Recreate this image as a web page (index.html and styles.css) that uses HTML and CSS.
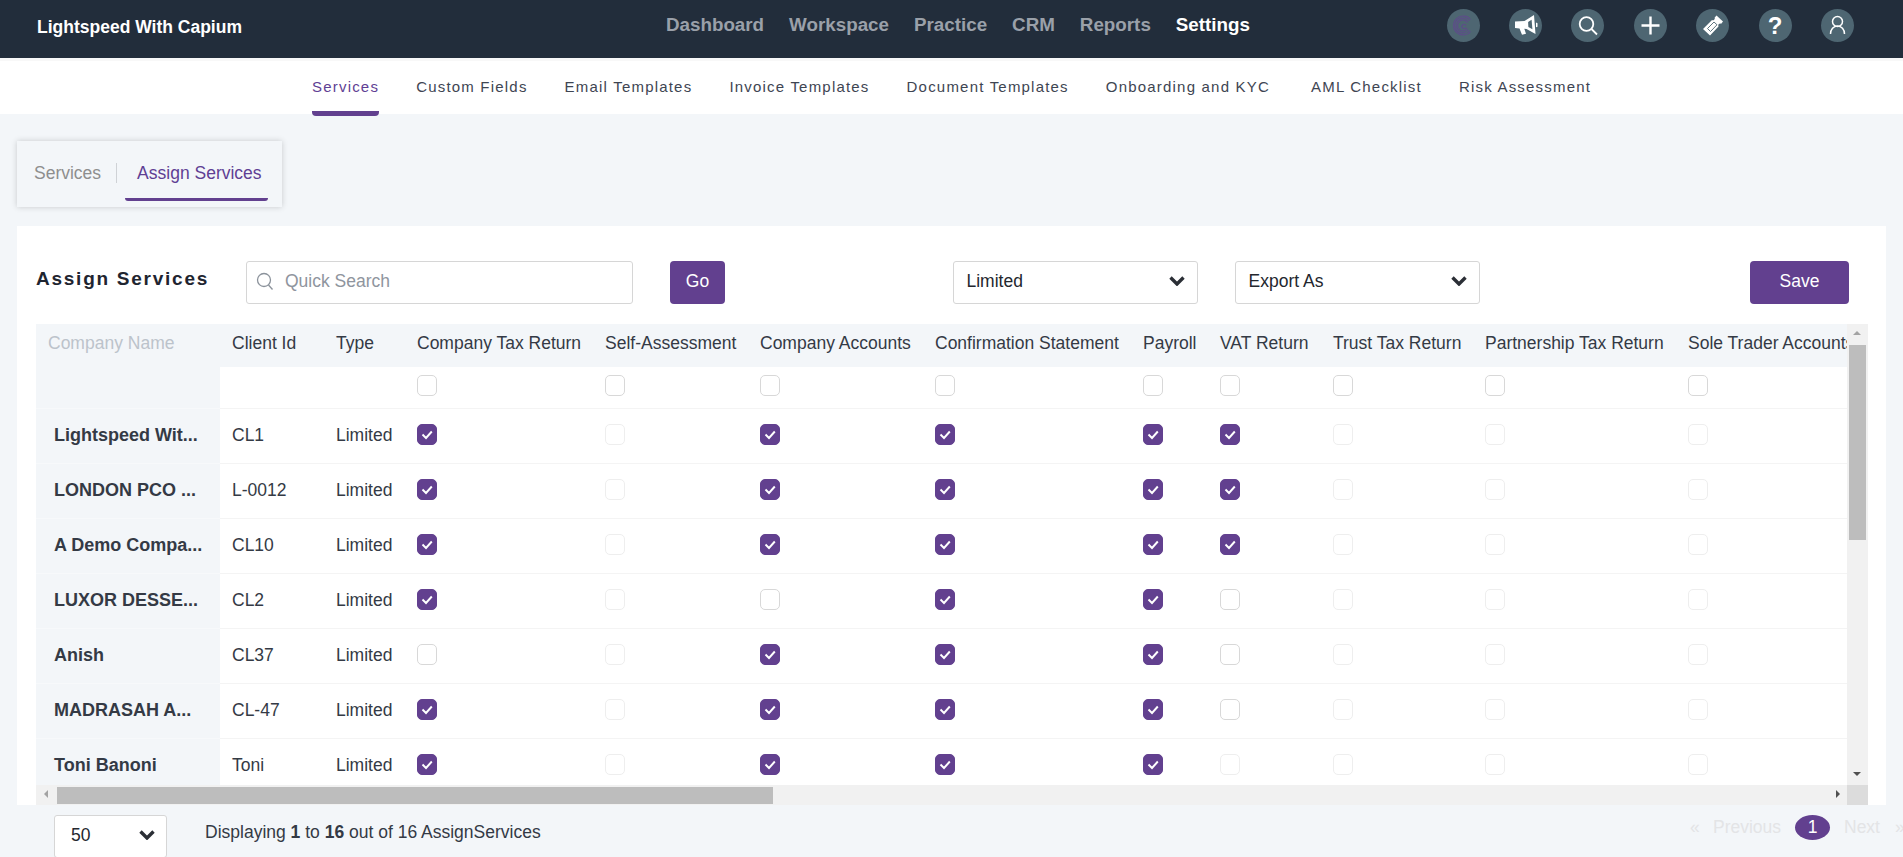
FILE: index.html
```html
<!DOCTYPE html>
<html lang="en">
<head>
<meta charset="utf-8">
<title>Assign Services</title>
<link rel="stylesheet" href="styles.css">
</head>
<body>
<header class="topbar">
  <div class="brand">Lightspeed With Capium</div>
  <nav class="mainnav">
    <a>Dashboard</a><a>Workspace</a><a>Practice</a><a>CRM</a><a>Reports</a><a class="on">Settings</a>
  </nav>
  <div class="tools">
    <span class="tool"><svg viewBox="0 0 33 33" width="33" height="33"><g fill="none" stroke="#5f4a8c" stroke-width="1.100"><path d="M23.500 10.500a9.500 9.500 0 1 0 0 12"/><path d="M22 12a7.500 7.500 0 1 0 0 9"/><path d="M20.500 13.500a5.500 5.500 0 1 0 0 6"/></g><text x="17" y="20" class="logo-c">C</text></svg></span>
    <span class="tool"><svg viewBox="0 0 33 33" width="33" height="33"><path fill="#fff" d="M6 12.500l9.500-.5 9.500-6 1.500 19-9-5-2.200-.2 1.700 5-4 1-2.500-6.300-4.500-.5z"/><path fill="#4e6672" d="M22.600 10.800l.8 9.400-4-2.300-.3-4.900z"/><path fill="#fff" d="M27 13.500l1.500.8v3.500l-1.500.4z"/></svg></span>
    <span class="tool"><svg viewBox="0 0 33 33" width="33" height="33" fill="none" stroke="#fff" stroke-width="1.800"><circle cx="15.500" cy="15" r="6.800"/><path d="M20.500 20l5.500 5.500"/></svg></span>
    <span class="tool"><svg viewBox="0 0 33 33" width="33" height="33" fill="none" stroke="#fff" stroke-width="2.400"><path d="M16.500 7.500v18M7.500 16.500h18"/></svg></span>
    <span class="tool"><svg viewBox="0 0 33 33" width="33" height="33"><path fill="#fff" d="M20.500 6.500l6.500 6-1.800 2.200a2 2 0 0 0-2.700 2.700L14 26.500l-7-6.500 9-9a2 2 0 0 0 2.700-2.500z"/><path fill="none" stroke="#4e6672" stroke-width=".9" d="M11.500 19.500l6.500-6.500 3 2.800-6.500 6.700z"/></svg></span>
    <span class="tool"><span class="qmark">?</span></span>
    <span class="tool"><svg viewBox="0 0 33 33" width="33" height="33" fill="none" stroke="#fff" stroke-width="1.500"><circle cx="16.500" cy="12.500" r="5"/><path d="M9.500 25c0-4.500 3-8 7-8s7 3.500 7 8"/></svg></span>
  </div>
</header>
<nav class="subnav">
  <a class="on">Services</a><a>Custom Fields</a><a>Email Templates</a><a>Invoice Templates</a><a>Document Templates</a><a>Onboarding and KYC</a><a class="wide">AML Checklist</a><a>Risk Assessment</a>
</nav>
<main class="page">
  <div class="tabs">
    <a class="tab">Services</a><span class="sep"></span><a class="tab active">Assign Services</a>
  </div>
  <section class="panel">
    <div class="toolbar">
      <h1 class="title">Assign Services</h1>
      <label class="search">
        <svg viewBox="0 0 20 20" width="20" height="20" fill="none" stroke="#8b929b" stroke-width="1.300"><circle cx="9" cy="9" r="6.500"/><path d="M13.500 14l4 4.500"/></svg>
        <span>Quick Search</span>
      </label>
      <button class="btn go">Go</button>
      <div class="select sel-a"><span>Limited</span><svg class="chev" viewBox="0 0 16 10" width="16" height="10"><path d="M1.500 1.500L8 8l6.500-6.500" fill="none" stroke="#2b2f36" stroke-width="3.400"/></svg></div>
      <div class="select sel-b"><span>Export As</span><svg class="chev" viewBox="0 0 16 10" width="16" height="10"><path d="M1.500 1.500L8 8l6.500-6.500" fill="none" stroke="#2b2f36" stroke-width="3.400"/></svg></div>
      <button class="btn save">Save</button>
    </div>
    <div class="grid">
      <div class="view">
        <table>
          <colgroup><col class="c1"><col class="c2"><col class="c3"><col class="c4"><col class="c5"><col class="c6"><col class="c7"><col class="c8"><col class="c9"><col class="c10"><col class="c11"><col class="c12"></colgroup>
          <thead><tr>
            <th class="name-h">Company Name</th><th>Client Id</th><th>Type</th><th>Company Tax Return</th><th>Self-Assessment</th><th>Company Accounts</th><th>Confirmation Statement</th><th>Payroll</th><th>VAT Return</th><th>Trust Tax Return</th><th>Partnership Tax Return</th><th>Sole Trader Accounts</th>
          </tr></thead>
          <tbody id="rows"></tbody>
        </table>
      </div>
      <div class="vbar"><i class="arr up"></i><b class="vthumb"></b><i class="arr down"></i></div>
      <div class="hbar"><i class="arr left"></i><b class="hthumb"></b><i class="arr right"></i></div>
      <div class="corner"></div>
    </div>
  </section>
  <footer class="foot">
    <div class="select size"><span>50</span><svg class="chev" viewBox="0 0 16 10" width="16" height="10"><path d="M1.500 1.500L8 8l6.500-6.500" fill="none" stroke="#2b2f36" stroke-width="3.400"/></svg></div>
    <div class="count">Displaying <b>1</b> to <b>16</b> out of 16 AssignServices</div>
    <div class="pager"><span>«</span><span>Previous</span><em>1</em><span>Next</span><span>»</span></div>
  </footer>
</main>
<script src="app.js"></script>
</body>
</html>
```
FILE: styles.css
```css
* { box-sizing: border-box; }
html, body { margin: 0; height: 857px; overflow: hidden; }
body { background: #f3f6f9; font-family: "Liberation Sans", Arial, sans-serif; color: #343a45; }
.topbar { height: 58px; background: #222d3b; display: flex; align-items: center; padding-right: 49px; }
.brand { color: #fff; font-weight: 700; font-size: 17.500px; margin-left: 37px; width: 629px; margin-top: -4px; white-space: nowrap; }
.mainnav { display: flex; gap: 25px; margin-top: -8px; }
.mainnav a { color: #9aa0a9; font-weight: 700; font-size: 18.800px; }
.mainnav a.on { color: #fff; }
.tools { display: flex; gap: 29.400px; margin-left: auto; margin-top: -7px; }
.tool { width: 33px; height: 33px; border-radius: 50%; background: #4e6672; display: flex; align-items: center; justify-content: center; }
.tool svg { display: block; }
.logo-c { font: 700 8px "Liberation Sans", sans-serif; fill: #5f4a8c; text-anchor: middle; }
.qmark { color: #fff; font-weight: 700; font-size: 24px; line-height: 1; }
.subnav { height: 56px; background: #fff; border-top: 3px solid #f8f8f8; display: flex; gap: 37px; padding-left: 312px; }
.subnav a { font-size: 15px; letter-spacing: 1.200px; color: #3e4552; line-height: 52px; height: 55px; white-space: nowrap; position: relative; }
.subnav a.on { color: #5f3f94; border-bottom: 5px solid #62408f; border-radius: 0 0 4px 4px; z-index: 1; }
.subnav a.wide { margin-left: 4px; }
.page { display: flow-root; }
.tabs { margin: 27px 0 0 17px; width: 265px; height: 66px; background: #f3f6f9; box-shadow: 0 0 6px rgba(0,0,0,.18); display: flex; align-items: center; position: relative; padding-left: 17px; }
.tab { font-size: 17.500px; color: #8e8e8e; margin-top: -2px; white-space: nowrap; }
.sep { width: 1px; height: 20px; background: #cfd2d6; margin: -2px 20px 0 15px; flex: none; }
.tab.active { color: #5f3f94; }
.tab.active::after { content: ""; position: absolute; left: 108px; width: 143px; top: 57px; height: 3px; background: #62408f; border-radius: 0 0 3px 3px; }
.panel { margin: 19px 17px 0 17px; background: #fff; height: 579px; padding: 35px 19px 0 19px; }
.toolbar { display: flex; align-items: flex-start; height: 63px; }
.title { margin: 7px 0 0 0; width: 210px; flex: none; font-size: 19px; font-weight: 700; letter-spacing: 1.750px; color: #1f2530; line-height: 21px; white-space: nowrap; }
.search { width: 387px; height: 43px; flex: none; border: 1px solid #d6d6d6; border-radius: 3px; display: flex; align-items: center; gap: 10px; padding-left: 8px; color: #8f959e; font-size: 17.500px; }
.search span { margin-top: -2px; }
.search svg { margin-top: -3px; }
.btn { border: 0; background: #62408f; color: #fff; border-radius: 4px; height: 43px; flex: none; font: 17.500px "Liberation Sans", Arial, sans-serif; padding: 0 0 2px; }
.go { width: 55px; margin-left: 37px; }
.select { height: 43px; width: 245px; flex: none; border: 1px solid #d6d6d6; border-radius: 3px; background: #fff; display: flex; align-items: center; justify-content: space-between; padding: 0 12px 0 12.500px; font-size: 17.500px; color: #23272e; }
.select span { margin-top: -3px; }
.chev { margin-top: -3px; }
.sel-a { margin-left: 228px; }
.sel-b { margin-left: 37px; }
.save { width: 99px; margin-left: 270px; }
.grid { display: grid; grid-template-columns: 1811px 21px; grid-template-rows: 461px 20px; width: 1832px; }
.view { overflow: hidden; }
table { border-collapse: collapse; table-layout: fixed; width: 1839px; }
.c1 { width: 184px; } .c2 { width: 104px; } .c3 { width: 81px; } .c4 { width: 188px; } .c5 { width: 155px; } .c6 { width: 175px; } .c7 { width: 208px; } .c8 { width: 77px; } .c9 { width: 113px; } .c10 { width: 152px; } .c11 { width: 203px; } .c12 { width: 199px; }
th, td { padding: 0 0 0 12px; text-align: left; font-size: 17.500px; font-weight: 400; color: #343a45; white-space: nowrap; overflow: hidden; }
thead th { height: 43px; background: #f3f6f9; padding-bottom: 4px; }
th.name-h { color: #bcc3cb; }
td { height: 55px; border-bottom: 1px solid #f4f4f4; vertical-align: middle; }
tr.filter td { height: 41px; }
td.name { background: #f3f6f9; font-weight: 700; font-size: 18px; padding-left: 18px; border-bottom-color: #f7f9fb; }
.cb { display: block; width: 20px; height: 21px; border: 1px solid #d8d8d8; border-radius: 5px; background: #fff; margin: -3px 0 0; position: relative; }
.cb.dis { border-color: #eeeeee; }
.cb.chk { background: #62408f; border-color: #62408f; }
.cb.chk svg { position: absolute; left: 2px; top: 3px; display: block; }
.vbar { background: #f1f1f1; position: relative; }
.vthumb { position: absolute; left: 2px; right: 2px; top: 21px; height: 195px; background: #bdbdbd; }
.hbar { background: #f1f1f1; position: relative; }
.hthumb { position: absolute; left: 21px; top: 2px; bottom: 1px; width: 716px; background: #bdbdbd; }
.corner { background: #dcdcdc; }
.arr { position: absolute; width: 0; height: 0; border: 4.500px solid transparent; }
.arr.up { top: 7px; left: 6px; border-bottom-color: #a3a3a3; border-top-width: 0; }
.arr.down { bottom: 9px; left: 6px; border-top-color: #505050; border-bottom-width: 0; }
.arr.left { left: 8px; top: 5px; border-right-color: #a3a3a3; border-left-width: 0; }
.arr.right { right: 7px; top: 5px; border-left-color: #505050; border-right-width: 0; }
.foot { display: flex; align-items: flex-start; margin: 10px 0 0 54px; }
.size { width: 113px; height: 43px; padding: 0 11px 0 16px; }
.size span { margin-top: -2px; }
.count { margin: 7px 0 0 38px; font-size: 17.500px; width: 1485px; flex: none; white-space: nowrap; }
.pager { display: flex; flex: none; align-items: center; height: 25px; font-size: 17.500px; color: #e3e4e6; white-space: nowrap; }
.pager span:nth-child(1) { width: 23px; }
.pager span:nth-child(2) { width: 82px; }
.pager em { font-style: normal; width: 35px; height: 25px; border-radius: 50%; background: #62408f; color: #fff; text-align: center; line-height: 24px; margin-right: 14px; }
.pager span:nth-child(4) { width: 51px; }
```
FILE: app.js
```js
var rows = [
  ["Lightspeed Wit...", "CL1", "cdccccddd"],
  ["LONDON PCO ...", "L-0012", "cdccccddd"],
  ["A Demo Compa...", "CL10", "cdccccddd"],
  ["LUXOR DESSE...", "CL2", "cdecceddd"],
  ["Anish", "CL37", "edccceddd"],
  ["MADRASAH A...", "CL-47", "cdccceddd"],
  ["Toni Banoni", "Toni", "cdcccdddd"]
];
var tick = '<svg viewBox="0 0 14 13" width="14" height="13"><path d="M2.500 6.500l3.500 3.500 5.800-6.500" fill="none" stroke="#fff" stroke-width="1.900"/></svg>';
function box(k) {
  if (k === "c") return '<span class="cb chk">' + tick + '</span>';
  if (k === "d") return '<span class="cb dis"></span>';
  return '<span class="cb"></span>';
}
var h = '<tr class="filter"><td class="name"></td><td></td><td></td>';
for (var i = 0; i < 9; i++) h += '<td>' + box("e") + '</td>';
h += '<td></td></tr>';
rows.forEach(function (r) {
  h += '<tr><td class="name">' + r[0] + '</td><td>' + r[1] + '</td><td>Limited</td>';
  r[2].split("").forEach(function (k) { h += '<td>' + box(k) + '</td>'; });
  h += '<td></td></tr>';
});
document.getElementById("rows").innerHTML = h;
```
